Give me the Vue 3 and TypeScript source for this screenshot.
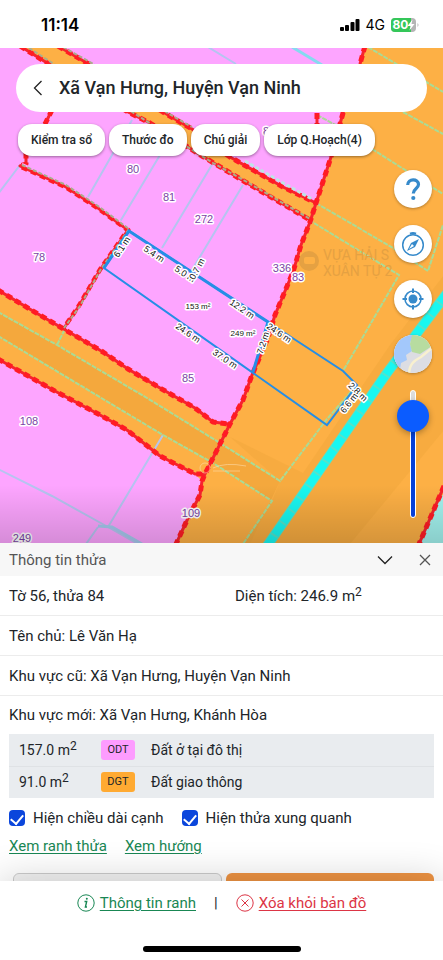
<script setup lang="ts">
import { ref } from 'vue'

interface MapLabel {
  text: string
  x: number
  y: number
  angle?: number
}

interface LandUse {
  area: string
  code: string
  name: string
  tone: string
}

const chips: string[] = ['Kiểm tra sổ', 'Thước đo', 'Chú giải', 'Lớp Q.Hoạch(4)']

const parcelNumbers: MapLabel[] = [
  { text: '8', x: 266, y: 131 },
  { text: '80', x: 133, y: 169 },
  { text: '81', x: 169, y: 197 },
  { text: '272', x: 204, y: 219 },
  { text: '78', x: 39, y: 257 },
  { text: '336', x: 282, y: 268 },
  { text: '83', x: 298, y: 277 },
  { text: '85', x: 188, y: 378 },
  { text: '108', x: 29, y: 421 },
  { text: '109', x: 191, y: 513 },
  { text: '249', x: 22, y: 538 },
]

const measures: MapLabel[] = [
  { text: '6.1 m', x: 122, y: 247, angle: -56 },
  { text: '5.4 m', x: 154, y: 254, angle: 34 },
  { text: '5.0 m', x: 185, y: 274, angle: 34 },
  { text: '0.7 m', x: 197, y: 269, angle: -62 },
  { text: '12.2 m', x: 242, y: 309, angle: 34 },
  { text: '24.6 m', x: 279, y: 333, angle: 34 },
  { text: '7.2 m', x: 263, y: 343, angle: -72 },
  { text: '24.6 m', x: 188, y: 333, angle: 34 },
  { text: '37.0 m', x: 225, y: 359, angle: 34 },
  { text: '2.8 m', x: 358, y: 392, angle: 44 },
  { text: '6.6 m', x: 349, y: 403, angle: -52 },
]

const areas: MapLabel[] = [
  { text: '153 m²', x: 198, y: 306 },
  { text: '249 m²', x: 243, y: 333 },
]

const landUses: LandUse[] = [
  { area: '157.0', code: 'ODT', name: 'Đất ở tại đô thị', tone: 'pink' },
  { area: '91.0', code: 'DGT', name: 'Đất giao thông', tone: 'orange' },
]

// Zoning borders, drawn twice: a solid core and a wider dashed pass for the stepped edge.
const zoneBorders: string[] = [
  'M365 46 360 64 343 113 331 157 317 200 310 222 301 245 293 272 275 315 268 338 252 375 243 400 230 424 217 450 205 474 202 481 200 495 189 516 176 544',
  'M317 113V126',
  'M20 46 52 66 128 112 150 123 202 156 247 183 310 220',
  'M58 46 92 66 163 112 192 129 230 157 283 187 316 203',
  'M52 110 45 124 26 152V164L20 166 66 187 98 208 128 230 100 270 79 306 64 328',
  'M-2 290 38 314 62 328 103 352 128 369 160 388 195 408 213 422 229 424',
  'M-2 359 53 390 100 415 127 430 160 456 195 474H205',
  'M444 486 432 514 419 544',
]

const opacity = ref<number>(90)
const showEdges = ref<boolean>(true)
const showNeighbours = ref<boolean>(true)
</script>

<template>
  <div class="page">
    <header class="status">
      <span class="clock">11:14</span>
      <div class="status-icons">
        <svg width="20" height="13" viewBox="0 0 20 13" aria-hidden="true">
          <rect x="0" y="8" width="4" height="4" rx="1" />
          <rect x="5" y="6" width="4" height="6" rx="1" />
          <rect x="10.500" y="3" width="4" height="9" rx="1" />
          <rect x="15.500" y="0" width="4" height="12" rx="1" />
        </svg>
        <span class="network">4G</span>
        <svg width="29" height="14" viewBox="0 0 29 14" aria-hidden="true">
          <rect width="25" height="14" rx="4" fill="#b5b5b5" />
          <path d="M4 0H20V14H4A4 4 0 0 1 0 10V4A4 4 0 0 1 4 0Z" fill="#34c759" />
          <path d="M26.500 5Q28.500 7 26.500 9Z" fill="#b5b5b5" />
          <text x="9.500" y="11.200" class="battery-text">80</text>
          <path d="M21.500 1.500 16.500 8H19.500L18.500 12.500 23.500 6H20.500Z" fill="#fff" />
        </svg>
      </div>
    </header>

    <main class="map">
      <svg class="map-canvas" viewBox="0 48 443 495" preserveAspectRatio="xMidYMid slice" aria-label="Bản đồ">
        <defs>
          <linearGradient id="edge-shade" x1="0" y1="0" x2="0" y2="1">
            <stop offset="0" stop-color="#000" stop-opacity="0" />
            <stop offset="1" stop-color="#000" stop-opacity="0.16" />
          </linearGradient>
        </defs>
        <rect x="-10" y="40" width="470" height="510" fill="#fda5ff" />

        <g fill="#fdb045">
          <path d="M365 46 360 64 343 113 331 157 317 200 310 222 301 245 293 272 275 315 268 338 252 375 243 400 230 424 217 450 205 474 202 481 200 495 189 516 176 544H450V46Z" />
          <path d="M20 46 52 66 128 112 150 123 202 156 247 183 310 220 316 203 283 187 230 157 192 129 163 112 92 66 58 46Z" />
          <path d="M-2 290 38 314 62 328 103 352 128 369 160 388 195 408 213 422 229 424 202 481 195 474 160 456 127 430 53 390-2 359Z" />
        </g>
        <path d="M0 313 57 345 147 398 220 443 280 481 250 544H243L272 501 213 463 163 435 0 337Z" fill="#f4a83d" />
        <path d="M230 437 303 473 390 345 444 275V430L350 544H245L272 501 280 481Z" fill="#f4a93e" opacity=".7" />
        <path d="M450 482 432 514 419 544H450Z" fill="#a3f3ef" />

        <g class="parcel-lines">
          <path d="M20 165-2 194M132 120 88 197M160 155 118 225M213 163 162 248M243 185 192 270" />
          <path d="M208 47 236 64M163 435 108 527M-2 469 52 496 108 527 138 544M98 527 86 544" />
          <path d="M292 47 322 65" stroke="#85daf0" stroke-width="3" />
          <path d="M98 526 112 527 142 544" stroke="#a5c9ee" stroke-width="3" />
        </g>
        <g class="road-lines">
          <path d="M368 47 443 92M317 115 343 129M403 112 443 134M372 149 443 194M316 203 393 248 428 271 443 225" />
          <path d="M309 220 399 275 343 371M-2 312 57 345 147 398 220 443 280 481 327 419 357 385" />
          <path d="M-2 336 163 435 213 463 272 501 243 544M57 345 65 329" />
        </g>

        <path d="M448 292 387 373 328 458 267 546" fill="none" stroke="#52e4cc" stroke-width="10" />
        <path d="M448 292 387 373 328 458 267 546" fill="none" stroke="#18f7f1" stroke-width="8" stroke-dasharray="13 2" />

        <g fill="none" stroke-linejoin="round">
          <g stroke="#f6242e" stroke-width="3">
            <path v-for="(d, i) in zoneBorders" :key="i" :d="d" />
          </g>
          <g stroke="#ff1b24" stroke-width="5" stroke-dasharray="6 4">
            <path v-for="(d, i) in zoneBorders" :key="i" :d="d" />
          </g>
          <g stroke="#fda5ff" stroke-width="2">
            <path d="M22 164 66 184 98 205 129 228" />
            <path d="M131 231 103 271 82 307 67 329" />
          </g>
          <g class="edge-dots">
            <path d="M22 165 66 185 98 206 129 229 101 269 80 306 64 328" />
            <path d="M29 48 57 66 132 112 213 163 247 182 310 219" />
            <path d="M63 47 97 66 166 112 192 127" />
          </g>
          <path d="M245 161 283 183 312 199" stroke="#bde5e5" stroke-width="3" stroke-dasharray="4 2" />
        </g>

        <g class="poi">
          <circle cx="309" cy="261" r="10" />
          <rect x="304" y="257" width="11" height="7" rx="2" fill="#fdb045" />
          <text x="323" y="260">VỰA HẢI S</text>
          <text x="323" y="276">XUÂN TỰ 2</text>
        </g>
        <g fill="none" stroke="#ffe1b4" opacity=".55">
          <circle cx="205" cy="468" r="5" />
          <path d="M213 468Q225 462 246 466M213 471H240" />
        </g>

        <g class="selection">
          <path d="M129 231 104 268 327 425 357 385 343 371 268 322Z" stroke-width="2" />
          <path d="M104 268 129 231 268 322 253 372" stroke-width="3" />
        </g>

        <g class="parcel-number">
          <text v-for="label in parcelNumbers" :key="label.text" :x="label.x" :y="label.y" dy="4">{{ label.text }}</text>
        </g>
        <g class="measure">
          <text
            v-for="(label, i) in measures"
            :key="i"
            dy="3"
            :transform="`translate(${label.x} ${label.y}) rotate(${label.angle})`"
          >{{ label.text }}</text>
        </g>
        <g class="area">
          <text v-for="label in areas" :key="label.text" :x="label.x" :y="label.y" dy="3">{{ label.text }}</text>
        </g>
        <rect x="-10" y="485" width="470" height="60" fill="url(#edge-shade)" />
      </svg>

      <div class="overlay">
        <div class="search">
          <button class="back" type="button" aria-label="Quay lại">
            <svg width="10" height="16" viewBox="0 0 10 16"><path d="M8.500 1 1.500 8 8.500 15" /></svg>
          </button>
          <h1>Xã Vạn Hưng, Huyện Vạn Ninh</h1>
        </div>
        <nav class="chips">
          <button v-for="chip in chips" :key="chip" type="button">{{ chip }}</button>
        </nav>
        <div class="tools">
          <button type="button" aria-label="Trợ giúp">
            <svg width="38" height="38" viewBox="0 0 38 38">
              <path d="M13.700 15C13.700 8.200 24.500 8.200 24.500 14.500C24.500 18.500 19.300 18.500 19.300 23.500" fill="none" stroke="#368acb" stroke-width="3.200" />
              <circle cx="19.300" cy="28" r="2.100" fill="#368acb" />
            </svg>
          </button>
          <button type="button" aria-label="La bàn">
            <svg width="38" height="38" viewBox="0 0 38 38" fill="none" stroke="#368acb" stroke-width="1.500">
              <circle cx="19" cy="20" r="10.300" />
              <path d="M16 8.700Q19 7.300 22 8.700" stroke-width="2.200" />
              <path d="M25 14 21 22 13 26 17 18Z" fill="#368acb" stroke="none" />
              <path d="M18 19 20 21 15 24Z" fill="#fff" stroke="none" />
            </svg>
          </button>
          <button type="button" aria-label="Vị trí của tôi">
            <svg width="38" height="38" viewBox="0 0 38 38" fill="none" stroke="#368acb" stroke-width="1.600">
              <circle cx="19" cy="19" r="8" />
              <circle cx="19" cy="19" r="4.500" fill="#368acb" stroke="none" />
              <path d="M19 8.500V13M19 25V29.500M8.500 19H13M25 19H29.500" stroke-width="2" />
            </svg>
          </button>
          <button class="layer" type="button" aria-label="Lớp bản đồ nền">
            <svg width="38" height="38" viewBox="0 0 38 38">
              <rect width="38" height="38" fill="#dcdde3" />
              <path d="M0 0H19L16 8 18 16 12 20 13 25 7 28 6 34 0 35Z" fill="#a3c8fb" />
              <path d="M18 0H38V11L26 19 18 17 16 9Z" fill="#b7dca0" />
              <path d="M15 38C16 27 22 25 27 22L38 13" fill="none" stroke="#f8f0cf" stroke-width="2.500" />
            </svg>
          </button>
          <input v-model.number="opacity" class="opacity" type="range" min="0" max="100" aria-label="Độ mờ lớp quy hoạch" />
        </div>
      </div>
    </main>

    <section class="sheet">
      <div class="sheet-head">
        <h2>Thông tin thửa</h2>
        <button type="button" aria-label="Thu gọn">
          <svg width="16" height="10" viewBox="0 0 16 10"><path d="M1 1.500 8 8.500 15 1.500" /></svg>
        </button>
        <button class="close" type="button" aria-label="Đóng">
          <svg width="12" height="12" viewBox="0 0 12 12"><path d="M1 1 11 11M11 1 1 11" /></svg>
        </button>
      </div>
      <div class="row split">
        <span>Tờ 56, thửa 84</span>
        <span>Diện tích: 246.9 m<sup>2</sup></span>
      </div>
      <div class="row">Tên chủ: Lê Văn Hạ</div>
      <div class="row">Khu vực cũ: Xã Vạn Hưng, Huyện Vạn Ninh</div>
      <div class="row last">Khu vực mới: Xã Vạn Hưng, Khánh Hòa</div>

      <div class="table-wrap">
        <table>
          <tbody>
            <tr v-for="use in landUses" :key="use.code">
              <td class="size">{{ use.area }} m<sup>2</sup></td>
              <td class="code"><span class="badge" :class="use.tone">{{ use.code }}</span></td>
              <td>{{ use.name }}</td>
            </tr>
          </tbody>
        </table>
      </div>

      <div class="checks">
        <label><input v-model="showEdges" type="checkbox" />Hiện chiều dài cạnh</label>
        <label><input v-model="showNeighbours" type="checkbox" />Hiện thửa xung quanh</label>
      </div>
      <div class="links">
        <a href="#ranh-thua">Xem ranh thửa</a>
        <a href="#huong">Xem hướng</a>
      </div>
      <div class="actions">
        <button type="button" aria-label="Đóng thông tin"></button>
        <button class="primary" type="button" aria-label="Xem chi tiết"></button>
      </div>
    </section>

    <footer class="footer">
      <div class="footer-links">
        <a class="info" href="#thong-tin-ranh">
          <svg width="18" height="18" viewBox="0 0 18 18" fill="none" stroke="currentColor">
            <circle cx="9" cy="9" r="8.200" />
            <path d="M7.500 7.500H9.700L8.400 13H10" stroke-width="1.400" />
            <circle cx="9.800" cy="4.800" r="1" fill="currentColor" stroke="none" />
          </svg>
          <span>Thông tin ranh</span>
        </a>
        <span class="bar">|</span>
        <a class="remove" href="#xoa">
          <svg width="18" height="18" viewBox="0 0 18 18" fill="none" stroke="currentColor">
            <circle cx="9" cy="9" r="8.200" />
            <path d="M5.500 5.500 12.500 12.500M12.500 5.500 5.500 12.500" />
          </svg>
          <span>Xóa khỏi bản đồ</span>
        </a>
      </div>
      <div class="home"></div>
    </footer>
  </div>
</template>

<style>
body {
  background: #fff;
}
</style>

<style scoped>
* {
  box-sizing: border-box;
}

.page {
  display: flex;
  flex-direction: column;
  min-height: 100vh;
  overflow: hidden;
  color: #212529;
  font-family: Roboto, "Noto Sans", sans-serif;
  font-size: 15px;
  line-height: 20px;
}

button {
  padding: 0;
  border: 0;
  background: none;
  color: inherit;
  font: inherit;
}

h1,
h2 {
  margin: 0;
}

sup {
  font-size: 12px;
  line-height: 0;
  vertical-align: 5px;
}

.status {
  display: flex;
  align-items: center;
  justify-content: space-between;
  height: 48px;
  padding: 2px 23px 0 41px;
  background: #fff;
  color: #000;
  font-family: Inter, sans-serif;
}

.clock {
  font-size: 17px;
  font-weight: 600;
}

.status-icons {
  display: flex;
  align-items: center;
  gap: 6px;
}

.network {
  font-size: 14px;
}

.battery-text {
  fill: #fff;
  font-size: 12px;
  font-weight: 700;
  text-anchor: middle;
}

.map {
  position: relative;
  flex: 1;
  min-height: 495px;
  overflow: hidden;
}

.map-canvas {
  position: absolute;
  inset: 0;
  width: 100%;
  height: 100%;
}

.parcel-lines {
  fill: none;
  stroke: #b5c4f0;
  stroke-width: 2;
}

.road-lines {
  fill: none;
  stroke: #a9dc96;
  stroke-width: 2;
  stroke-dasharray: 5 1;
}

.edge-dots {
  stroke: #abad8c;
  stroke-width: 2;
  stroke-dasharray: 4 2;
}

.poi {
  fill: #e5a142;
  font-size: 14px;
}

.selection {
  fill: none;
  stroke: #258ee6;
}

.parcel-number,
.measure,
.area {
  fill: #7c3fa6;
  stroke: #fff;
  stroke-width: 3px;
  stroke-linejoin: round;
  paint-order: stroke;
  font-family: "Liberation Sans", Arial, sans-serif;
  font-size: 11px;
  text-anchor: middle;
}

.measure,
.area {
  fill: #111;
  font-size: 8px;
}

.measure {
  font-size: 9px;
}

.overlay {
  position: relative;
  display: flex;
  flex-direction: column;
  padding: 16px 11px 0 16px;
}

.search {
  display: flex;
  align-items: center;
  height: 48px;
  margin-right: 5px;
  border-radius: 24px;
  background: #fff;
}

.back {
  display: flex;
  width: 43px;
  padding-left: 17px;
}

.back svg,
.sheet-head svg {
  fill: none;
  stroke: #222;
  stroke-width: 1.3px;
}

.sheet-head .close svg {
  stroke: #555;
}

.search h1 {
  font-size: 18px;
  font-weight: 500;
  line-height: 24px;
}

.chips {
  display: flex;
  gap: 4px;
  margin: 12px 0 0 2px;
}

.chips button {
  height: 32px;
  padding: 0 13px;
  border-radius: 14px;
  background: #fff;
  box-shadow: 0 1px 3px rgba(0, 0, 0, 0.4);
  font-size: 12px;
  font-weight: 500;
  white-space: nowrap;
}

.tools {
  display: flex;
  flex-direction: column;
  align-items: center;
  align-self: flex-end;
  gap: 17px;
  margin-top: 14px;
}

.tools button {
  width: 38px;
  height: 38px;
  overflow: hidden;
  border-radius: 50%;
  background: #fff;
  box-shadow: 0 1px 3px rgba(0, 0, 0, 0.3);
}

.tools svg {
  display: block;
}

.opacity {
  width: 32px;
  height: 128px;
  margin: 0;
  background: none;
  appearance: none;
  direction: rtl;
  writing-mode: vertical-lr;
}

.opacity::-webkit-slider-runnable-track {
  width: 6px;
  height: 128px;
  border: 1px solid #fff;
  border-radius: 3px;
  background: linear-gradient(#dcdcdc 20%, #0640d8 20%);
}

.opacity::-webkit-slider-thumb {
  width: 32px;
  height: 32px;
  margin-left: -14px;
  border-radius: 50%;
  background: #0b5cff;
  box-shadow: 0 2px 6px rgba(0, 0, 0, 0.3);
  appearance: none;
}

.sheet {
  background: #fff;
}

.sheet-head {
  display: flex;
  align-items: center;
  gap: 26px;
  height: 33px;
  padding: 0 12px 0 9px;
  background: #f7f7f7;
}

.sheet-head h2 {
  flex: 1;
  color: #555;
  font-size: 15px;
  font-weight: 400;
}

.sheet-head button {
  display: flex;
}

.row {
  display: flex;
  align-items: center;
  height: 40px;
  padding: 0 9px;
  border-bottom: 1px solid #ececec;
  white-space: pre;
}

.row.last {
  height: 38px;
  border-bottom: 0;
}

.split {
  display: grid;
  grid-template-columns: 226px 1fr;
}

.table-wrap {
  padding: 0 9px;
}

table {
  width: 100%;
  border-collapse: collapse;
  background: #e9ecef;
  font-size: 14px;
}

td {
  height: 32px;
  padding: 0;
}

tr + tr td {
  border-top: 1px solid #dfe2e5;
}

.size {
  width: 92px;
  padding-left: 10px;
}

.code {
  width: 50px;
}

.badge {
  display: block;
  width: 34px;
  border-radius: 3px;
  font-size: 11px;
  text-align: center;
}

.pink {
  background: #fd9cff;
}

.orange {
  background: #ffaa32;
}

.checks,
.links {
  display: flex;
  gap: 18px;
  margin-top: 10px;
  padding: 0 9px;
}

.checks label {
  display: flex;
  align-items: center;
  gap: 8px;
}

.checks input {
  width: 16px;
  height: 16px;
  margin: 0;
  border-radius: 4px;
  background: #fff;
  appearance: none;
}

.checks input:not(:checked) {
  border: 1px solid #999;
}

.checks input:checked {
  display: grid;
  background: #0b46dc;
}

.checks input:checked::after {
  display: block;
  width: 6px;
  height: 10px;
  margin: 2px auto 0;
  border: solid #fff;
  border-width: 0 2px 2px 0;
  transform: rotate(40deg);
  content: "";
}

.links {
  margin-top: 8px;
}

.links a,
.info {
  color: #198754;
}

.links a,
.footer a span {
  text-decoration: underline;
  text-underline-offset: 2px;
}

.actions {
  display: grid;
  grid-template-columns: 1fr 1fr;
  gap: 4px;
  margin-top: 17px;
  padding: 0 9px 0 13px;
}

.actions button {
  height: 40px;
  border: 1px solid #ccc;
  border-radius: 6px;
  background: #f4f4f4;
}

.actions .primary {
  border: 0;
  background: #ef9443;
}

.footer {
  position: relative;
  display: flex;
  flex-direction: column;
  align-items: center;
  justify-content: space-between;
  height: 79px;
  margin-top: -32px;
  padding: 12px 0 8px;
  background: #fff;
  box-shadow: 0 0 40px rgba(0, 0, 0, 0.2);
}

.footer-links,
.footer a {
  display: flex;
  align-items: center;
}

.footer-links {
  gap: 18px;
}

.footer a {
  gap: 5px;
  text-decoration: none;
}

.footer .remove {
  color: #dc3545;
}

.home {
  width: 158px;
  height: 6px;
  border-radius: 3px;
  background: #000;
}
</style>
